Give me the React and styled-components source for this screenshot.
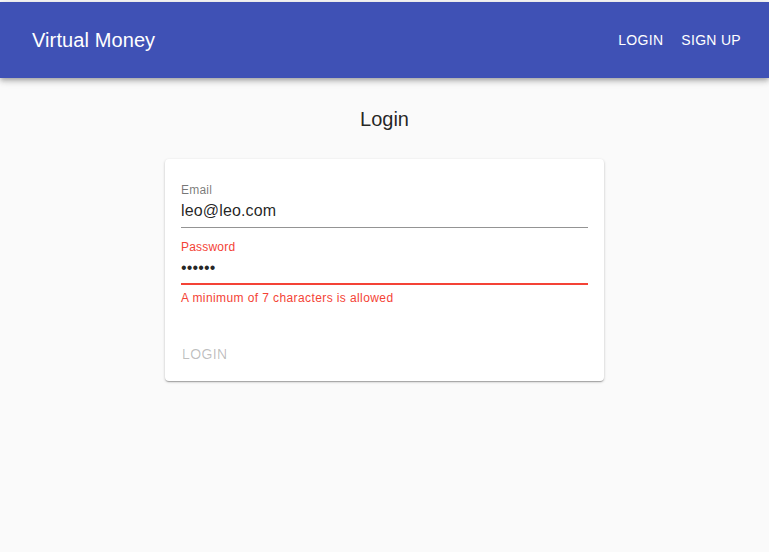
import React from "react"
import styled, { createGlobalStyle } from "styled-components"

const GlobalStyle = createGlobalStyle`
  html, body {
    margin: 0;
    padding: 0;
    background: #fafafa;
    font-family: "Liberation Sans", Arial, sans-serif;
  }
`

const Page = styled.div`
  min-height: 552px;
  padding-top: 2px;
  background: #fafafa;
  box-sizing: border-box;
`

const AppBar = styled.header`
  height: 76px;
  background: #3f51b5;
  color: #fff;
  display: flex;
  align-items: center;
  justify-content: space-between;
  padding: 0 20px 0 32px;
  box-shadow: 0 2px 4px -1px rgba(0,0,0,0.2), 0 4px 5px 0 rgba(0,0,0,0.14), 0 1px 10px 0 rgba(0,0,0,0.12);
  position: relative;
`

const Title = styled.div`
  font-size: 20px;
  letter-spacing: 0.1px;
`

const Nav = styled.nav`
  display: flex;
  gap: 2px;
`

const NavButton = styled.button`
  background: none;
  border: none;
  color: #fff;
  font-family: inherit;
  font-size: 14px;
  text-transform: uppercase;
  letter-spacing: 0.3px;
  padding: 6px 8px;
  cursor: pointer;
`

const Main = styled.main`
  display: flex;
  flex-direction: column;
  align-items: center;
  padding-top: 29px;
`

const Heading = styled.h1`
  margin: 0 0 28px;
  font-size: 20px;
  font-weight: normal;
  color: rgba(0,0,0,0.87);
  line-height: 24px;
`

const Card = styled.form`
  width: 439px;
  background: #fff;
  border-radius: 4px;
  box-shadow: 0 1px 3px 0 rgba(0,0,0,0.2), 0 1px 1px 0 rgba(0,0,0,0.14), 0 2px 1px -1px rgba(0,0,0,0.12);
  padding: 24px 16px 18px;
  box-sizing: border-box;
`

const Field = styled.div`
  display: flex;
  flex-direction: column;
  margin-bottom: ${p => p.last ? "0" : "12px"};
`

const Label = styled.label`
  font-size: 12px;
  line-height: 14px;
  letter-spacing: 0.2px;
  color: ${p => p.error ? "#f44336" : "rgba(0,0,0,0.54)"};
`

const Input = styled.input`
  border: none;
  outline: none;
  font-family: inherit;
  font-size: 16px;
  letter-spacing: 0.15px;
  color: rgba(0,0,0,0.87);
  padding: 5px 0 ${p => p.error ? "6px" : "7px"};
  margin: 0;
  background: transparent;
  border-bottom: ${p => p.error ? "2px solid #f44336" : "1px solid rgba(0,0,0,0.42)"};
`

const Helper = styled.p`
  margin: 6px 0 0;
  font-size: 12px;
  line-height: 14px;
  letter-spacing: 0.4px;
  color: #f44336;
`

const SubmitButton = styled.button`
  align-self: flex-start;
  margin-top: 41px;
  background: none;
  border: none;
  padding: 0 1px;
  font-family: inherit;
  font-size: 14px;
  text-transform: uppercase;
  letter-spacing: 0.4px;
  color: rgba(0,0,0,0.26);
  cursor: default;
`

export default function App() {
  return (
    <Page>
      <GlobalStyle />
      <AppBar>
        <Title>Virtual Money</Title>
        <Nav>
          <NavButton>Login</NavButton>
          <NavButton>Sign up</NavButton>
        </Nav>
      </AppBar>
      <Main>
        <Heading>Login</Heading>
        <Card onSubmit={e => e.preventDefault()}>
          <Field>
            <Label>Email</Label>
            <Input defaultValue="leo@leo.com" />
          </Field>
          <Field last>
            <Label error>Password</Label>
            <Input error type="password" defaultValue="123456" />
            <Helper>A minimum of 7 characters is allowed</Helper>
          </Field>
          <SubmitButton disabled>Login</SubmitButton>
        </Card>
      </Main>
    </Page>
  )
}
